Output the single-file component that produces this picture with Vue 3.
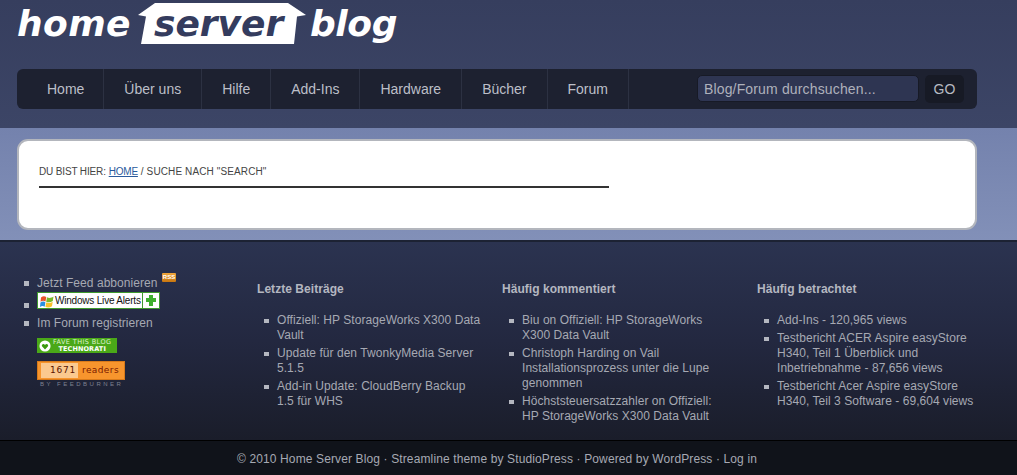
<script setup>
const menu = ['Home', 'Über uns', 'Hilfe', 'Add-Ins', 'Hardware', 'Bücher', 'Forum']

const columns = [
  {
    title: 'Letzte Beiträge',
    width: '245px',
    items: [
      'Offiziell: HP StorageWorks X300 Data Vault',
      'Update für den TwonkyMedia Server 5.1.5',
      'Add-in Update: CloudBerry Backup 1.5 für WHS'
    ]
  },
  {
    title: 'Häufig kommentiert',
    width: '255px',
    items: [
      'Biu on Offiziell: HP StorageWorks X300 Data Vault',
      'Christoph Harding on Vail Installationsprozess unter die Lupe genommen',
      'Höchststeuersatzzahler on Offiziell: HP StorageWorks X300 Data Vault'
    ]
  },
  {
    title: 'Häufig betrachtet',
    width: '240px',
    items: [
      'Add-Ins - 120,965 views',
      'Testbericht ACER Aspire easyStore H340, Teil 1 Überblick und Inbetriebnahme - 87,656 views',
      'Testbericht Acer Aspire easyStore H340, Teil 3 Software - 69,604 views'
    ]
  }
]
</script>

<template>
  <div class="page">
    <header class="head">
      <div class="logo">
        <span class="logo_word logo_home">home</span>
        <span class="logo_house">
          <svg class="house_shape" width="168" height="45" viewBox="0 0 168 45">
            <path d="M17 3H150L168 15L159 16.500L156 44H3L8 16.500L0 15Z" fill="#fff" />
          </svg>
          <span class="logo_server">server</span>
        </span>
        <span class="logo_word logo_blog">blog</span>
      </div>
      <nav class="nav">
        <ul class="menu">
          <li v-for="item in menu" :key="item">{{ item }}</li>
        </ul>
        <div class="search">
          <div class="search_box">Blog/Forum durchsuchen...</div>
          <div class="search_go">GO</div>
        </div>
      </nav>
    </header>

    <section class="band">
      <div class="card">
        <div class="crumb">
          <span class="crumb_label">DU BIST HIER:</span> <a class="crumb_link">HOME</a> / SUCHE NACH "SEARCH"
        </div>
      </div>
    </section>

    <section class="foot">
      <div class="side">
        <ul class="side_list">
          <li>Jetzt Feed abbonieren <span class="rss">RSS</span></li>
          <li class="side_live">
            <div class="live">
              <svg width="14" height="14" viewBox="0 0 14 14">
                <path d="M1 3.500C3 2 4.500 2 6.300 3L5.500 7.500C4 6.500 2.500 6.500 0.500 7.800Z" fill="#e8532b" />
                <path d="M7 3.200C9 4.300 11 4.200 13.500 2.500L12.800 7C10.500 8.500 8.500 8.500 6.200 7.700Z" fill="#7ab929" />
                <path d="M0.400 8.500C2.500 7.200 4 7.200 5.400 8.300L4.700 12.800C3 11.700 1.800 11.800 0 13Z" fill="#2a8fe0" />
                <path d="M6.100 8.500C8.500 9.300 10.500 9.200 12.700 7.800L12 12.300C10 13.700 7.500 13.800 5.400 13Z" fill="#f8c22c" />
              </svg>
              <span class="live_text">Windows Live Alerts</span>
              <span class="live_plus"></span>
            </div>
          </li>
          <li>Im Forum registrieren</li>
        </ul>
        <div class="techno">
          <svg class="techno_icon" width="12" height="12" viewBox="0 0 14 14">
            <circle cx="7" cy="7" r="6.500" fill="#fff" />
            <path d="M7 11L3.500 7.200C2.500 5.200 5.500 3.500 7 5.800C8.500 3.500 11.500 5.200 10.500 7.200Z" fill="#3c9a10" />
          </svg>
          <div class="techno_text">
            <span>FAVE THIS BLOG</span>
            <b>TECHNORATI</b>
          </div>
        </div>
        <div class="burner">
          <div class="burner_box">
            <span class="burner_num">1671</span>
            <span class="burner_label">readers</span>
          </div>
          <div class="burner_by">BY FEEDBURNER</div>
        </div>
      </div>

      <div v-for="col in columns" :key="col.title" class="col" :style="{ width: col.width }">
        <h4 class="col_title">{{ col.title }}</h4>
        <ul class="col_list">
          <li v-for="item in col.items" :key="item">{{ item }}</li>
        </ul>
      </div>
    </section>

    <footer class="bottom">
      © 2010 Home Server Blog · Streamline theme by StudioPress · Powered by WordPress · Log in
    </footer>
  </div>
</template>

<style>
html, body {
  margin: 0;
  background: #0f1218;
}
</style>

<style scoped>
.page {
  width: 1017px;
  height: 475px;
  overflow: hidden;
  font-family: "Liberation Sans", Arial, sans-serif;
}

.head {
  height: 128px;
  box-sizing: border-box;
  padding: 0 40px 0 17px;
  background: linear-gradient(#363e5e, #3c4566);
}

.logo {
  height: 69px;
  display: flex;
  align-items: flex-start;
  font-family: "DejaVu Sans", sans-serif;
  font-style: italic;
  font-weight: 700;
  font-size: 36px;
  line-height: 47px;
  color: #fff;
}

.logo_home {
  width: 121px;
  letter-spacing: 0.4px;
}

.logo_blog {
  letter-spacing: -0.4px;
}

.logo_house {
  position: relative;
  width: 168px;
  height: 45px;
  margin-right: 4px;
}

.house_shape {
  position: absolute;
  left: 0;
  top: 0;
}

.logo_server {
  position: absolute;
  left: 16px;
  top: 0;
  color: #343c5e;
}

.nav {
  height: 40px;
  box-sizing: border-box;
  display: flex;
  justify-content: space-between;
  align-items: center;
  padding-right: 13px;
  background: #1d2130;
  border-radius: 6px;
}

.menu {
  display: flex;
  height: 40px;
  margin: 0;
  padding: 0;
  list-style: none;
}

.menu li {
  padding: 0 20px;
  border-right: 1px solid #2c3142;
  font-size: 14px;
  line-height: 40px;
  color: #bcbfc8;
}

.menu li:first-child {
  padding: 0 19px 0 30px;
}

.search {
  display: flex;
  gap: 6px;
}

.search_box {
  width: 222px;
  height: 27px;
  box-sizing: border-box;
  padding-left: 6px;
  background: #2e3552;
  border: 1px solid #171a26;
  border-radius: 5px;
  font-size: 14px;
  letter-spacing: 0.15px;
  line-height: 26px;
  color: #aeb1bc;
}

.search_go {
  width: 39px;
  height: 28px;
  background: #171a25;
  border-radius: 5px;
  font-size: 14px;
  line-height: 28px;
  text-align: center;
  color: #b8bbc3;
}

.band {
  height: 112px;
  box-sizing: border-box;
  padding: 11px 40px 0 17px;
  background: linear-gradient(#7482ad, #8290b8);
}

.card {
  height: 91px;
  box-sizing: border-box;
  padding: 25px 20px 0;
  background: #fff;
  border: 2px solid #b3b6bd;
  border-radius: 11px;
}

.crumb {
  width: 570px;
  height: 20px;
  border-bottom: 2px solid #333;
  font-size: 10px;
  letter-spacing: 0.12px;
  line-height: 12px;
  color: #444;
}

.crumb_label {
  letter-spacing: -0.15px;
}

.crumb_link {
  letter-spacing: -0.2px;
  color: #2a5a9c;
  text-decoration: underline;
}

.foot {
  height: 200px;
  box-sizing: border-box;
  display: flex;
  padding-top: 32px;
  border-top: 2px solid #1c2233;
  background: linear-gradient(#2b3350, #232840 50%, #1a1d2a);
  font-size: 12px;
  line-height: 15px;
  letter-spacing: 0.05px;
  color: #a6a9b3;
}

.side {
  width: 257px;
  box-sizing: border-box;
  padding: 2px 0 0 37px;
}

.side_list {
  margin: 0;
  padding: 0;
  list-style: none;
}

.side_list li {
  position: relative;
  min-height: 15px;
  margin-bottom: 1px;
}

.side_list li::before {
  content: "";
  position: absolute;
  left: -13px;
  top: 5px;
  width: 5px;
  height: 5px;
  background: #b4b7c0;
}

.side_list .side_live {
  height: 17px;
  margin-bottom: 7px;
}

.side_list .side_live::before {
  top: 11px;
}

.rss {
  position: absolute;
  left: 125px;
  top: -3px;
  width: 14px;
  height: 9px;
  background: linear-gradient(#f0a63c, #c8760f);
  border-radius: 1px;
  font-size: 6px;
  line-height: 9px;
  font-weight: 700;
  text-align: center;
  color: #fff;
}

.live {
  width: 123px;
  height: 17px;
  box-sizing: border-box;
  display: flex;
  align-items: center;
  gap: 1px;
  padding-left: 2px;
  background: #fff;
  border: 1px solid #3f9a2f;
}

.live_text {
  font-size: 10px;
  letter-spacing: -0.2px;
  white-space: nowrap;
  color: #111;
}

.live_plus {
  position: relative;
  width: 16px;
  height: 15px;
  margin-left: auto;
  border-left: 1px solid #3f9a2f;
}

.live_plus::before {
  content: "";
  position: absolute;
  left: 6px;
  top: 2px;
  width: 4px;
  height: 11px;
  background: #3fb02f;
}

.live_plus::after {
  content: "";
  position: absolute;
  left: 3px;
  top: 5px;
  width: 10px;
  height: 4px;
  background: #3fb02f;
}

.techno {
  width: 80px;
  height: 15px;
  margin-top: 7px;
  display: flex;
  align-items: center;
  gap: 2px;
  padding-left: 2px;
  box-sizing: border-box;
  overflow: hidden;
  background: #4aa818;
}

.techno_icon {
  flex: none;
}

.techno_text {
  display: flex;
  flex-direction: column;
  align-items: center;
  font-family: "DejaVu Sans", sans-serif;
  font-size: 6.500px;
  line-height: 6.500px;
  letter-spacing: 0.4px;
  white-space: nowrap;
  color: #dff2cf;
}

.techno_text b {
  color: #fff;
  letter-spacing: 0.1px;
}

.burner {
  width: 88px;
  margin-top: 8px;
}

.burner_box {
  height: 19px;
  box-sizing: border-box;
  display: flex;
  align-items: center;
  padding: 0 1px 0 3px;
  background: #f7952d;
  border: 1px solid #d87a1a;
}

.burner_num {
  width: 37px;
  height: 15px;
  box-sizing: border-box;
  padding-right: 2px;
  background: #fbc98f;
  font-family: "DejaVu Sans", sans-serif;
  font-size: 9px;
  line-height: 15px;
  letter-spacing: 0.8px;
  text-align: right;
  color: #5a1400;
}

.burner_label {
  margin-left: 4px;
  font-family: "DejaVu Sans", sans-serif;
  font-size: 9px;
  letter-spacing: 0.4px;
  color: #7a1a00;
}

.burner_by {
  margin-top: 1px;
  padding-left: 3px;
  font-size: 6px;
  line-height: 7px;
  letter-spacing: 2.500px;
  white-space: nowrap;
  color: #7e8290;
}

.col {
  box-sizing: border-box;
  padding-top: 8px;
}

.col_title {
  margin: 0 0 16px;
  font-size: 12px;
  line-height: 15px;
  color: #b4b7c0;
}

.col_list {
  width: 225px;
  box-sizing: border-box;
  margin: 0;
  padding: 0 0 0 20px;
  list-style: none;
}

.col_list li {
  position: relative;
  margin-bottom: 3px;
}

.col_list li::before {
  content: "";
  position: absolute;
  left: -13px;
  top: 6px;
  width: 5px;
  height: 4px;
  background: #b4b7c0;
}

.bottom {
  height: 35px;
  box-sizing: border-box;
  padding-right: 23px;
  border-top: 1px solid #000;
  background: #10131a;
  font-size: 12px;
  letter-spacing: 0.125px;
  line-height: 36px;
  text-align: center;
  color: #a6a9b3;
}
</style>
